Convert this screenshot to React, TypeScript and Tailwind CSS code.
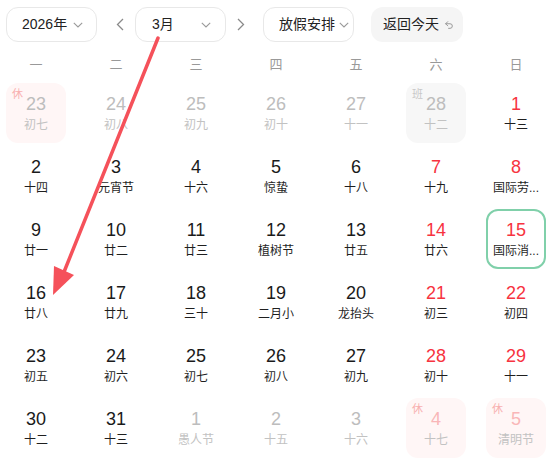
import React from 'react';

type Kind = 'cur' | 'other';
interface Day {
    n: number;
    lunar: string;
    kind: Kind;
    red?: boolean;
    tag?: '休' | '班';
    selected?: boolean;
}

const d = (n: number, lunar: string, kind: Kind = 'cur', extra: Partial<Day> = {}): Day => ({ n, lunar, kind, ...extra });

const weeks: Day[][] = [
    [
        d(23, '初七', 'other', { tag: '休' }),
        d(24, '初八', 'other'),
        d(25, '初九', 'other'),
        d(26, '初十', 'other'),
        d(27, '十一', 'other'),
        d(28, '十二', 'other', { tag: '班' }),
        d(1, '十三', 'cur', { red: true }),
    ],
    [
        d(2, '十四'),
        d(3, '元宵节'),
        d(4, '十六'),
        d(5, '惊蛰'),
        d(6, '十八'),
        d(7, '十九', 'cur', { red: true }),
        d(8, '国际劳...', 'cur', { red: true }),
    ],
    [
        d(9, '廿一'),
        d(10, '廿二'),
        d(11, '廿三'),
        d(12, '植树节'),
        d(13, '廿五'),
        d(14, '廿六', 'cur', { red: true }),
        d(15, '国际消...', 'cur', { red: true, selected: true }),
    ],
    [
        d(16, '廿八'),
        d(17, '廿九'),
        d(18, '三十'),
        d(19, '二月小'),
        d(20, '龙抬头'),
        d(21, '初三', 'cur', { red: true }),
        d(22, '初四', 'cur', { red: true }),
    ],
    [
        d(23, '初五'),
        d(24, '初六'),
        d(25, '初七'),
        d(26, '初八'),
        d(27, '初九'),
        d(28, '初十', 'cur', { red: true }),
        d(29, '十一', 'cur', { red: true }),
    ],
    [
        d(30, '十二'),
        d(31, '十三'),
        d(1, '愚人节', 'other'),
        d(2, '十五', 'other'),
        d(3, '十六', 'other'),
        d(4, '十七', 'other', { tag: '休' }),
        d(5, '清明节', 'other', { tag: '休' }),
    ],
];

const weekdays = ['一', '二', '三', '四', '五', '六', '日'];

function Chevron({ dir = 'down', className = '' }: { dir?: 'down' | 'left' | 'right'; className?: string }) {
    if (dir === 'down') {
        return (
            <svg width="10" height="6" viewBox="0 0 10 6" className={`shrink-0 ${className}`}>
                <path d="M0.8 0.8L5 5l4.2-4.2" fill="none" stroke="currentColor" strokeWidth="1.1" />
            </svg>
        );
    }
    return (
        <svg width="8" height="13" viewBox="0 0 8 13" className={`shrink-0 ${className}`}>
            <path d={dir === 'left' ? 'M7 1L1.5 6.5 7 12' : 'M1 1l5.5 5.5L1 12'} fill="none" stroke="currentColor" strokeWidth="1.3" />
        </svg>
    );
}

function Select({ label, className = '' }: { label: string; className?: string }) {
    return (
        <div className={`h-[35px] w-[91px] shrink-0 rounded-[12px] border border-[#e8e8e8] bg-white flex items-center text-[14px] text-[#222] whitespace-nowrap ${className}`}>
            <span>{label}</span>
            <Chevron className="text-[#9a9a9a]" />
        </div>
    );
}

function Cell({ day }: { day: Day }) {
    const other = day.kind === 'other';
    let bg = '';
    if (day.tag === '休') bg = 'bg-[#fff6f6]';
    if (day.tag === '班') bg = 'bg-[#f7f7f7]';

    let numColor = 'text-[#1a1a1a]';
    if (day.red) numColor = 'text-[#f7333f]';
    if (other) numColor = day.tag === '休' && day.n < 10 ? 'text-[#f9b6b8]' : 'text-[#bdbdbd]';

    const lunarColor = other ? 'text-[#c2c2c2]' : 'text-[#1f1f1f]';

    return (
        <div
            className={`relative h-[60px] w-[60px] rounded-[12px] flex flex-col items-center ${bg} ${
                day.selected ? 'border-2 border-[#80d0aa] pt-[9px]' : 'pt-[11px]'
            }`}
        >
            {day.tag && (
                <span
                    className={`absolute left-[6px] top-[4px] text-[11px] leading-[14px] ${
                        day.tag === '休' ? 'text-[#f8b0b0]' : 'text-[#c8c8c8]'
                    }`}
                >
                    {day.tag}
                </span>
            )}
            <span className={`text-[18px] leading-[20px] ${numColor}`}>{day.n}</span>
            <span className={`mt-[3px] text-center text-[12px] leading-[16px] whitespace-nowrap ${lunarColor}`}>
                {day.lunar}
            </span>
        </div>
    );
}

export default function App() {
    return (
        <div className="relative w-[551px] h-[461px] overflow-hidden bg-white font-['Liberation_Sans','Noto_Sans_CJK_SC',sans-serif]">
            {/* Toolbar */}
            <div className="flex items-center pt-[7px] pl-[6px]">
                <Select label="2026年" className="pl-[15px] pr-[13px] justify-between" />
                <div className="w-[38px] flex justify-center pl-[8px] text-[#8a8a8a]">
                    <Chevron dir="left" />
                </div>
                <Select label="3月" className="pl-[16px] pr-[14px] justify-between" />
                <div className="w-[30px] flex justify-center text-[#8a8a8a]">
                    <Chevron dir="right" />
                </div>
                <Select label="放假安排" className="ml-[7px] pl-[15px] gap-[4px]" />
                <button className="ml-[17px] h-[35px] w-[92px] shrink-0 rounded-[12px] bg-[#f5f5f5] flex items-center pl-[12px] gap-[5px] text-[14px] text-[#222] whitespace-nowrap">
                    <span>返回今天</span>
                    <svg width="10" height="10" viewBox="0 0 24 24" className="text-[#999]">
                        <path d="M9 14 4 9l5-5" fill="none" stroke="currentColor" strokeWidth="2.4" strokeLinecap="round" strokeLinejoin="round" />
                        <path d="M4 9h10.5a5.5 5.5 0 0 1 0 11H11" fill="none" stroke="currentColor" strokeWidth="2.4" strokeLinecap="round" strokeLinejoin="round" />
                    </svg>
                </button>
            </div>

            {/* Weekday header */}
            <div className="mt-[8px] pl-[6px] grid grid-cols-[repeat(7,60px)] gap-x-[20px] h-[30px] items-center">
                {weekdays.map((w) => (
                    <div key={w} className="text-center text-[13px] text-[#999]">
                        {w}
                    </div>
                ))}
            </div>

            {/* Days */}
            <div className="mt-[3px] pl-[6px] grid grid-cols-[repeat(7,60px)] gap-x-[20px] gap-y-[3px]">
                {weeks.flat().map((day, i) => (
                    <Cell key={i} day={day} />
                ))}
            </div>

            {/* Annotation arrow */}
            <svg className="absolute inset-0 pointer-events-none" width="551" height="461" viewBox="0 0 551 461">
                <line x1="158" y1="38" x2="64" y2="272" stroke="#f5515a" strokeWidth="3.5" strokeLinecap="round" />
                <polygon points="53,295 54,266 74,275" fill="#f5515a" />
            </svg>
        </div>
    );
}
